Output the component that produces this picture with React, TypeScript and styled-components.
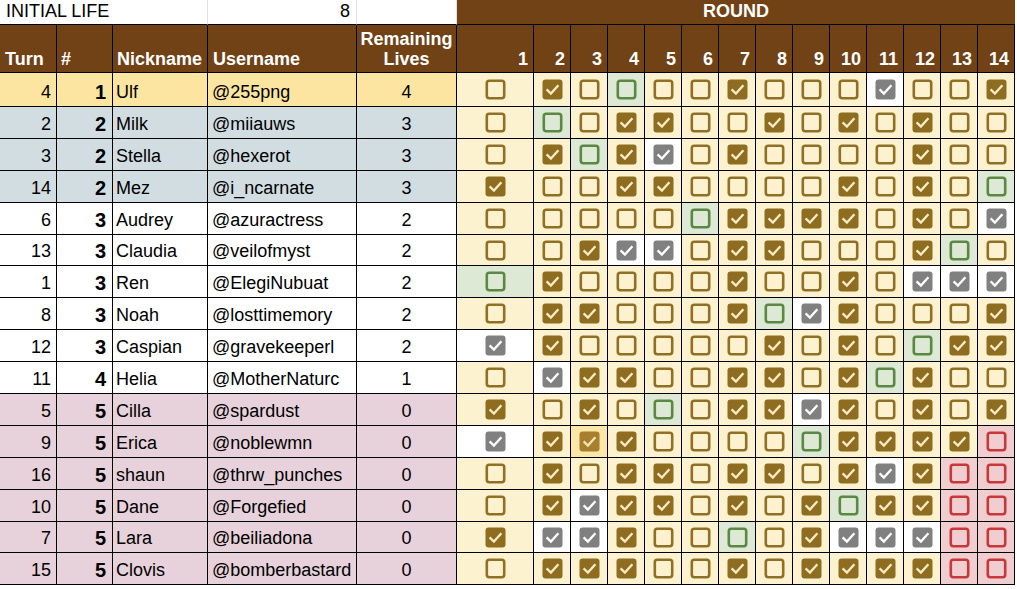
import React from 'react';
import styled, { createGlobalStyle } from 'styled-components';

const Brown = '#704216';
const Cream = '#fdf2d0';
const Line = '#000';

type Kind = 'u' | 'c' | 'g' | 'x' | 'r' | 'y';
type Tone = 'gold' | 'blue' | 'plain' | 'pink';

const toneBg: Record<Tone, string> = {
  gold: '#fce5a0',
  blue: '#d1dde1',
  plain: '#ffffff',
  pink: '#e7d1da',
};

const cellBg: Record<Kind, string> = {
  u: Cream,
  c: Cream,
  g: '#dde9d5',
  x: '#ffffff',
  r: '#f0cecf',
  y: '#fbe6a7',
};

const ink: Record<Kind, { fill: string; tick: string }> = {
  u: { fill: '#907024', tick: '' },
  c: { fill: '#8e6d21', tick: '#f8ebc3' },
  g: { fill: '#5b8845', tick: '' },
  x: { fill: '#808080', tick: '#ffffff' },
  r: { fill: '#c6383a', tick: '' },
  y: { fill: '#a6802f', tick: '#f6e3b0' },
};

const rows: {
  turn: number;
  rank: number;
  nick: string;
  user: string;
  lives: number;
  tone: Tone;
  marks: string;
}[] = [
  { turn: 4, rank: 1, nick: 'Ulf', user: '@255png', lives: 4, tone: 'gold', marks: 'ucuguucuuuxuuc' },
  { turn: 2, rank: 2, nick: 'Milk', user: '@miiauws', lives: 3, tone: 'blue', marks: 'uguccuucucucuu' },
  { turn: 3, rank: 2, nick: 'Stella', user: '@hexerot', lives: 3, tone: 'blue', marks: 'ucgcxucuuuucuu' },
  { turn: 14, rank: 2, nick: 'Mez', user: '@i_ncarnate', lives: 3, tone: 'blue', marks: 'cuuccuuuucucug' },
  { turn: 6, rank: 3, nick: 'Audrey', user: '@azuractress', lives: 2, tone: 'plain', marks: 'uuuuugccccucux' },
  { turn: 13, rank: 3, nick: 'Claudia', user: '@veilofmyst', lives: 2, tone: 'plain', marks: 'uucxxuccuuucgu' },
  { turn: 1, rank: 3, nick: 'Ren', user: '@ElegiNubuat', lives: 2, tone: 'plain', marks: 'gcuuuucuucuxxx' },
  { turn: 8, rank: 3, nick: 'Noah', user: '@losttimemory', lives: 2, tone: 'plain', marks: 'uccuuucgxcuuuc' },
  { turn: 12, rank: 3, nick: 'Caspian', user: '@gravekeeperl', lives: 2, tone: 'plain', marks: 'xcuuuuucucugcc' },
  { turn: 11, rank: 4, nick: 'Helia', user: '@MotherNaturc', lives: 1, tone: 'plain', marks: 'uxccuuccucgcuu' },
  { turn: 5, rank: 5, nick: 'Cilla', user: '@spardust', lives: 0, tone: 'pink', marks: 'cucuguccxcucuc' },
  { turn: 9, rank: 5, nick: 'Erica', user: '@noblewmn', lives: 0, tone: 'pink', marks: 'xcycuuuugccccr' },
  { turn: 16, rank: 5, nick: 'shaun', user: '@thrw_punches', lives: 0, tone: 'pink', marks: 'ucuccuccucxcrr' },
  { turn: 10, rank: 5, nick: 'Dane', user: '@Forgefied', lives: 0, tone: 'pink', marks: 'ucxccucucgccrr' },
  { turn: 7, rank: 5, nick: 'Lara', user: '@beiliadona', lives: 0, tone: 'pink', marks: 'cxxcuugucxxxrr' },
  { turn: 15, rank: 5, nick: 'Clovis', user: '@bomberbastard', lives: 0, tone: 'pink', marks: 'ucccuucuccccrr' },
];

const rounds = Array.from({ length: 14 }, (_, i) => i + 1);

const GlobalStyle = createGlobalStyle`
  html, body {
    margin: 0;
    background: #ffffff;
  }
  body {
    font-family: 'Liberation Sans', Arial, sans-serif;
  }
`;

const Sheet = styled.div`
  display: grid;
  grid-template-columns: 57px 56px 95px 149px 100px 77px repeat(13, 37px);
  grid-template-rows: 25px 48px 34px repeat(15, 31.9px);
  width: 1015px;
  font-size: 18px;
  color: #000;
`;

const TopCell = styled.div<{ $span?: number; $align?: string }>`
  grid-column: span ${(p) => p.$span || 1};
  display: flex;
  align-items: flex-end;
  justify-content: ${(p) => p.$align || 'flex-start'};
  padding: 0 6px 2px 6px;
  line-height: 22px;
  background: #fff;
  border-right: 1px solid #e2e2e2;
  border-bottom: 1px solid ${Line};
  box-sizing: border-box;
  white-space: nowrap;
`;

const RoundBanner = styled.div`
  grid-column: span 14;
  display: flex;
  align-items: flex-end;
  justify-content: center;
  padding-bottom: 2px;
  line-height: 22px;
  background: ${Brown};
  color: #fff;
  font-weight: bold;
  border-bottom: 1px solid ${Line};
  box-sizing: border-box;
`;

const HeadCell = styled.div<{ $align?: string; $pad?: string }>`
  display: flex;
  align-items: flex-end;
  justify-content: ${(p) => p.$align || 'flex-start'};
  text-align: ${(p) => (p.$align === 'center' ? 'center' : 'left')};
  padding: ${(p) => p.$pad || '0 5px 3px 5px'};
  line-height: 20px;
  background: ${Brown};
  color: #fff;
  font-weight: bold;
  border-right: 1px solid ${Line};
  border-bottom: 1px solid ${Line};
  box-sizing: border-box;
  white-space: nowrap;
`;

const DataCell = styled.div<{ $bg: string; $align?: string; $pad?: string; $bold?: boolean }>`
  display: flex;
  align-items: flex-end;
  justify-content: ${(p) => p.$align || 'flex-start'};
  padding: ${(p) => p.$pad || '0 4px 3px 4px'};
  line-height: 22px;
  font-size: ${(p) => (p.$bold ? '20px' : '18px')};
  font-weight: ${(p) => (p.$bold ? 'bold' : 'normal')};
  background: ${(p) => p.$bg};
  border-right: 1px solid ${Line};
  border-bottom: 1px solid ${Line};
  box-sizing: border-box;
  white-space: nowrap;
`;

const RoundCell = styled.div<{ $bg: string }>`
  display: flex;
  align-items: center;
  justify-content: center;
  background: ${(p) => p.$bg};
  border-right: 1px solid ${Line};
  border-bottom: 1px solid ${Line};
  box-sizing: border-box;
`;

const Box = styled.svg`
  display: block;
  width: 21px;
  height: 21px;
`;

const Mark = ({ kind }: { kind: Kind }) => {
  const c = ink[kind];
  if (kind === 'c' || kind === 'x' || kind === 'y') {
    return (
      <Box viewBox="0 0 21 21">
        <rect x="0.5" y="0.5" width="20" height="20" rx="3" fill={c.fill} />
        <path d="M4.6 10.4 L8.9 14.6 L16.4 6.2" fill="none" stroke={c.tick} strokeWidth="2.3" />
      </Box>
    );
  }
  return (
    <Box viewBox="0 0 21 21">
      <rect x="1.8" y="1.8" width="17.4" height="17.4" rx="2.4" fill="none" stroke={c.fill} strokeWidth="2.6" />
    </Box>
  );
};

export default function App() {
  return (
    <>
      <GlobalStyle />
      <Sheet>
        <TopCell $span={3}>INITIAL LIFE</TopCell>
        <TopCell $align="flex-end">8</TopCell>
        <TopCell />
        <RoundBanner>ROUND</RoundBanner>

        <HeadCell>Turn</HeadCell>
        <HeadCell $pad="0 4px 3px 4px">#</HeadCell>
        <HeadCell $pad="0 4px 3px 4px">Nickname</HeadCell>
        <HeadCell>Username</HeadCell>
        <HeadCell $align="center">
          Remaining
          <br />
          Lives
        </HeadCell>
        {rounds.map((n) => (
          <HeadCell key={n} $align="flex-end">
            {n}
          </HeadCell>
        ))}

        {rows.map((r) => {
          const bg = toneBg[r.tone];
          return (
            <React.Fragment key={r.user}>
              <DataCell $bg={bg} $align="flex-end" $pad="0 5px 3px 4px">
                {r.turn}
              </DataCell>
              <DataCell $bg={bg} $align="flex-end" $pad="0 6px 3px 4px" $bold>
                {r.rank}
              </DataCell>
              <DataCell $bg={bg} $pad="0 4px 3px 3px">
                {r.nick}
              </DataCell>
              <DataCell $bg={bg} $pad="0 4px 3px 4px">
                {r.user}
              </DataCell>
              <DataCell $bg={bg} $align="center">
                {r.lives}
              </DataCell>
              {r.marks.split('').map((m, i) => (
                <RoundCell key={i} $bg={cellBg[m as Kind]}>
                  <Mark kind={m as Kind} />
                </RoundCell>
              ))}
            </React.Fragment>
          );
        })}
      </Sheet>
    </>
  );
}
